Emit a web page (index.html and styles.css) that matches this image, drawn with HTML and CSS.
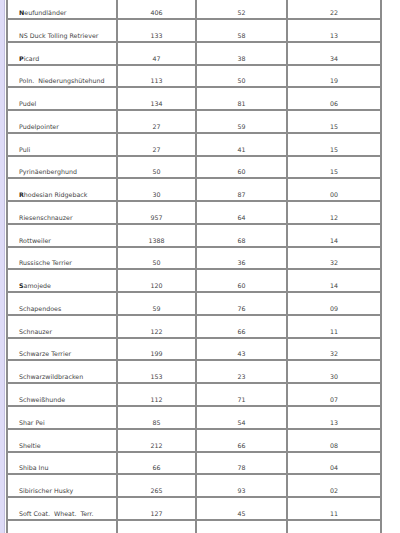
FILE: index.html
```html
<!DOCTYPE html>
<html lang="de">
<head>
<meta charset="utf-8">
<title>Rassen</title>
<link rel="stylesheet" href="styles.css">
</head>
<body>
<div class="page">
<table class="breeds">
<colgroup><col class="c1"><col class="c2"><col class="c3"><col class="c4"></colgroup>
<tbody>
<tr><td class="name"><b>N</b>eufundländer</td><td>406</td><td>52</td><td>22</td></tr>
<tr><td class="name">NS Duck Tolling Retriever</td><td>133</td><td>58</td><td>13</td></tr>
<tr><td class="name"><b>P</b>icard</td><td>47</td><td>38</td><td>34</td></tr>
<tr><td class="name">Poln.&nbsp; Niederungshütehund</td><td>113</td><td>50</td><td>19</td></tr>
<tr><td class="name">Pudel</td><td>134</td><td>81</td><td>06</td></tr>
<tr><td class="name">Pudelpointer</td><td>27</td><td>59</td><td>15</td></tr>
<tr><td class="name">Puli</td><td>27</td><td>41</td><td>15</td></tr>
<tr><td class="name">Pyrinäenberghund</td><td>50</td><td>60</td><td>15</td></tr>
<tr><td class="name"><b>R</b>hodesian Ridgeback</td><td>30</td><td>87</td><td>00</td></tr>
<tr><td class="name">Riesenschnauzer</td><td>957</td><td>64</td><td>12</td></tr>
<tr><td class="name">Rottweiler</td><td>1388</td><td>68</td><td>14</td></tr>
<tr><td class="name">Russische Terrier</td><td>50</td><td>36</td><td>32</td></tr>
<tr><td class="name"><b>S</b>amojede</td><td>120</td><td>60</td><td>14</td></tr>
<tr><td class="name">Schapendoes</td><td>59</td><td>76</td><td>09</td></tr>
<tr><td class="name">Schnauzer</td><td>122</td><td>66</td><td>11</td></tr>
<tr><td class="name">Schwarze Terrier</td><td>199</td><td>43</td><td>32</td></tr>
<tr><td class="name">Schwarzwildbracken</td><td>153</td><td>23</td><td>30</td></tr>
<tr><td class="name">Schweißhunde</td><td>112</td><td>71</td><td>07</td></tr>
<tr><td class="name">Shar Pei</td><td>85</td><td>54</td><td>13</td></tr>
<tr><td class="name">Sheltie</td><td>212</td><td>66</td><td>08</td></tr>
<tr><td class="name">Shiba Inu</td><td>66</td><td>78</td><td>04</td></tr>
<tr><td class="name">Sibirischer Husky</td><td>265</td><td>93</td><td>02</td></tr>
<tr><td class="name">Soft Coat.&nbsp; Wheat.&nbsp; Terr.</td><td>127</td><td>45</td><td>11</td></tr>
<tr><td class="name">&nbsp;</td><td>&nbsp;</td><td>&nbsp;</td><td>&nbsp;</td></tr>
</tbody>
</table>
</div>
</body>
</html>
```
FILE: styles.css
```css
html, body {
  margin: 0;
  padding: 0;
}
body {
  background: #dedbf7;
  font-family: "DejaVu Sans", Verdana, sans-serif;
  overflow: hidden;
  height: 533px;
}
.page {
  margin-left: 4px;
  border-left: 1px solid #c4c0e0;
  background: #ffffff;
  padding-left: 1px;
  min-height: 560px;
}
.breeds {
  margin-top: -4.77px;
  border-collapse: collapse;
  table-layout: fixed;
  width: 374px;
  border: 2px solid #8c8c8c;
  font-size: 6.3px;
  color: #444444;
}
.c1 { width: 110px; }
.c2 { width: 79px; }
.c3 { width: 91px; }
.c4 { width: 94px; }
.breeds tr {
  height: 22.77px;
}
.breeds td {
  border: 2px solid #8c8c8c;
  padding: 0 0 2px 0;
  text-align: center;
  vertical-align: bottom;
  line-height: 7px;
  white-space: nowrap;
}
.breeds td.name {
  text-align: left;
  padding-left: 11px;
}
.breeds b {
  font-weight: bold;
  color: #222;
}
```
